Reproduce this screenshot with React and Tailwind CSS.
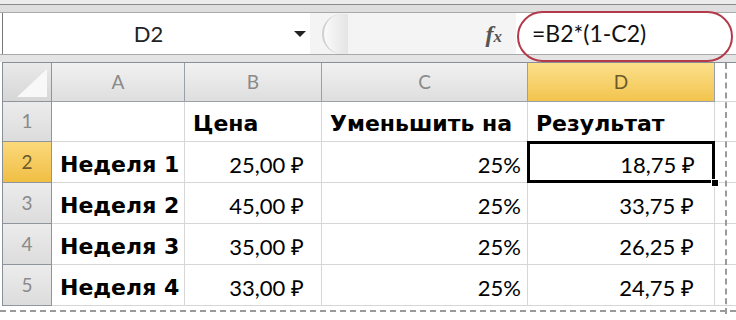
import React from 'react';

const COLS = 'grid grid-cols-[49px_133px_137px_206px_187px_1fr] grid-rows-[100%]';

const rows = [
  { n: '2', name: 'Неделя 1', price: '25,00 ₽', pct: '25%', res: '18,75 ₽', active: true },
  { n: '3', name: 'Неделя 2', price: '45,00 ₽', pct: '25%', res: '33,75 ₽' },
  { n: '4', name: 'Неделя 3', price: '35,00 ₽', pct: '25%', res: '26,25 ₽' },
  { n: '5', name: 'Неделя 4', price: '33,00 ₽', pct: '25%', res: '24,75 ₽' },
];

function ColHead({ label, active }) {
  return (
    <div
      className={`flex items-center justify-center border-r border-b border-[#9aa0a8] text-[19px] ${
        active
          ? 'bg-gradient-to-b from-[#fbe08a] to-[#f3c44c] text-[#6b5a2a]'
          : 'bg-gradient-to-b from-[#f1f1f1] to-[#dedede] text-[#8a8a8a]'
      }`}
    >
      {label}
    </div>
  );
}

function RowHead({ n, active }) {
  return (
    <div
      className={`flex items-center justify-center border-r border-b border-[#8f959c] text-[19px] ${
        active
          ? 'bg-gradient-to-b from-[#fbd97a] to-[#f0be42] text-[#6b5a2a]'
          : 'bg-gradient-to-b from-[#ececec] to-[#dcdcdc] text-[#8a8a8a]'
      }`}
    >
      {n}
    </div>
  );
}

function Cell({ children, align = 'left', bold, pad = 'px-2' }) {
  return (
    <div
      className={`flex items-end overflow-hidden whitespace-nowrap pb-[6px] border-r border-b border-[#d6d6d6] leading-none text-black ${pad} ${
        align === 'right' ? 'justify-end' : 'justify-start'
      } ${bold ? "font-['DejaVu_Sans',sans-serif] text-[22px] font-bold" : 'text-[22px]'}`}
    >
      {children}
    </div>
  );
}

export default function App() {
  return (
    <div className="relative w-[736px] h-[320px] overflow-hidden bg-white font-['Lato','Liberation_Sans',sans-serif]">
      <div className="h-[4px] bg-[#ececec]" />
      <div className="h-[8px] border-t border-[#8c8c8c] bg-[#dedede]" />
      <div className="flex h-[43px] border-y border-[#a9a9a9] bg-white">
        <div className="ml-[2px] flex w-[308px] items-center border-l border-[#777]">
          <div className="flex-1 text-center text-[22px] text-[#222]">D2</div>
          <div className="mr-[4px] h-0 w-0 border-x-[6px] border-t-[6px] border-x-transparent border-t-[#222]" />
        </div>
        <div className="flex flex-1 items-center bg-[#f4f4f4]">
          <div className="ml-[12px] h-[40px] w-[26px] rounded-l-full border-l-2 border-[#cfcfcf] bg-gradient-to-r from-[#fafafa] to-[#e4e4e4]" />
          <div className="ml-auto mr-[14px] font-['Liberation_Serif',serif] text-[24px] font-bold italic text-[#555]">
            f<span className="text-[17px]">x</span>
          </div>
        </div>
        <div className="flex w-[220px] items-center bg-white pl-[16px] text-[23px] text-[#111]">
          =B2*(1-C2)
        </div>
      </div>
      <div className="h-[7px] bg-[#e4e4e4]" />
      <div className="ml-[2px] border-l border-t border-[#8a8f96]">
        <div className={`${COLS} h-[39px]`}>
          <div className="flex items-end justify-end border-r border-b border-[#8f959c] bg-gradient-to-b from-[#eaeaea] to-[#d6d6d6] p-[4px]">
            <svg width="30" height="28" viewBox="0 0 30 28">
              <polygon points="30,0 30,28 0,28" fill="#f8f8f8" />
            </svg>
          </div>
          <ColHead label="A" />
          <ColHead label="B" />
          <ColHead label="C" />
          <ColHead label="D" active />
          <div className="border-b border-[#d6d6d6] bg-white" />
        </div>
        <div className={`${COLS} h-[40px]`}>
          <RowHead n="1" />
          <Cell />
          <Cell bold>Цена</Cell>
          <Cell bold>Уменьшить на</Cell>
          <Cell bold>Результат</Cell>
          <div className="border-b border-[#d6d6d6]" />
        </div>
        {rows.map((r) => (
          <div key={r.n} className={`${COLS} h-[41px]`}>
            <RowHead n={r.n} active={r.active} />
            <Cell bold>{r.name}</Cell>
            <Cell align="right" pad="pr-[17px]">{r.price}</Cell>
            <Cell align="right" pad="pr-[6px]">{r.pct}</Cell>
            {r.active ? (
              <div className="relative">
                <div className="absolute -left-[1px] -top-[1px] right-0 bottom-0 flex items-end justify-end border-[3px] border-black pb-[4px] pr-[17px] text-[22px] leading-none text-black">
                  {r.res}
                </div>
                <div className="absolute -bottom-[4px] -right-[4px] h-[8px] w-[8px] border border-white bg-black" />
              </div>
            ) : (
              <Cell align="right" pad="pr-[20px]">{r.res}</Cell>
            )}
            <div className="border-b border-[#d6d6d6]" />
          </div>
        ))}
      </div>
      <div className="mt-[4px] h-0 border-t-2 border-dashed border-[#9a9a9a]" />
      <div className="absolute top-[63px] bottom-[6px] left-[725px] border-l-2 border-dashed border-[#9a9a9a]" />
      <div className="absolute left-[517px] top-[11px] h-[51px] w-[216px] rounded-full border-2 border-[#b23a4a]" />
    </div>
  );
}
